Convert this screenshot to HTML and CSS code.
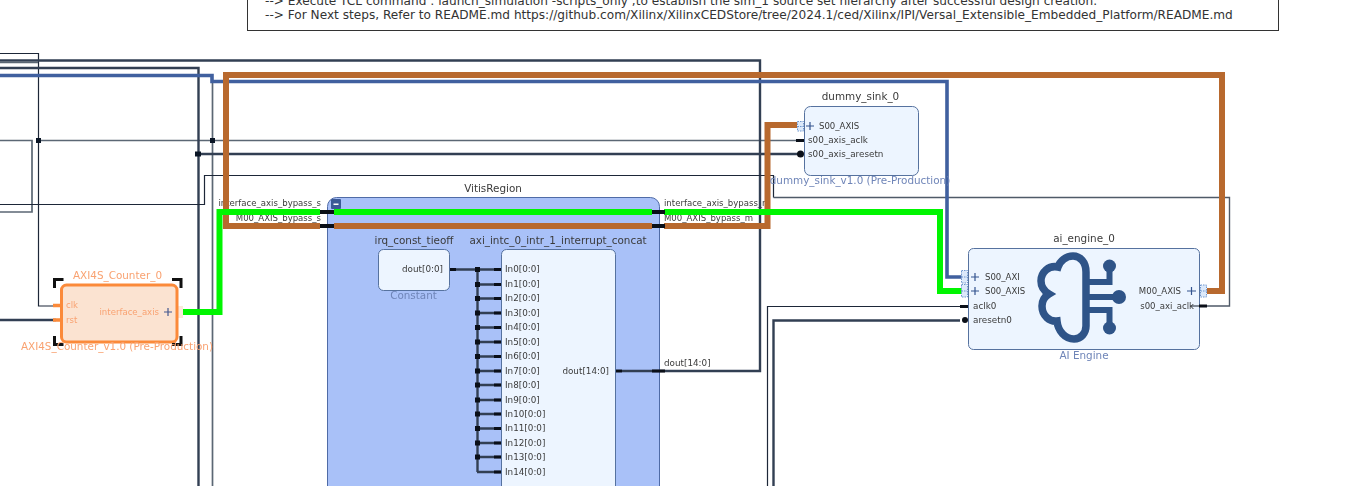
FILE: index.html
```html
<!DOCTYPE html>
<html lang="en">
<head>
<meta charset="utf-8">
<title>Block design</title>
<link rel="stylesheet" href="styles.css">
</head>
<body>
<section class="note">
<p>--&gt; Execute TCL command : launch_simulation -scripts_only ,to establish the sim_1 source set hierarchy after successful design creation.</p>
<p>--&gt; For Next steps, Refer to README.md https://github.com/Xilinx/XilinxCEDStore/tree/2024.1/ced/Xilinx/IPI/Versal_Extensible_Embedded_Platform/README.md</p>
</section>
<svg class="canvas" viewBox="0 31 1354 455" width="1354" height="455" xmlns="http://www.w3.org/2000/svg">
  <!-- region and blocks -->
  <rect class="region" x="327.5" y="197.5" width="332" height="320" rx="9"/>
  <rect class="ip" x="378.5" y="249.5" width="71" height="41" rx="5"/>
  <rect class="ip" x="501.5" y="249.5" width="114" height="270" rx="5"/>
  <rect class="ip" x="804.5" y="106.5" width="114" height="69" rx="6"/>
  <rect class="ip" x="968.5" y="248.5" width="231" height="101" rx="5"/>

  <!-- labels under wires -->
  <g class="lbl tight">
    <text class="end" x="321" y="206">interface_axis_bypass_s</text>
    <text class="end" x="321" y="221">M00_AXIS_bypass_s</text>
    <text x="664" y="206">interface_axis_bypass_m</text>
    <text x="664" y="221">M00_AXIS_bypass_m</text>
  </g>
  <g class="lbl">
    <text x="664" y="366">dout[14:0]</text>
  </g>

  <!-- thin and dark nets -->
  <path class="w-thin" d="M0 53.5H38.5V306H56"/>
  <path class="w-gray" d="M0 140.5H32V212H0"/>
  <path class="w-gray" d="M38 140.5H798"/>
  <path class="w-gray" d="M212.5 81V486"/>
  <path class="w-dark" d="M0 60.5H760V371H622"/>
  <path class="w-gray" d="M0 62.5H38"/>
  <path class="w-dark" d="M0 68H198.5V486"/>
  <path class="w-dark" d="M197 154H798"/>
  <path class="w-dark" d="M0 320H56"/>
  <path class="w-thin" d="M0 204.5H204.5V175.5H773.5V197.5"/>
  <path class="w-gray1" d="M773.5 197.5H1229.5V306H1207"/>
  <path class="w-gray1" d="M1190 306H1207"/>
  <path class="w-thin" d="M960 306.5H767.5V486"/>
  <path class="w-dark" d="M960 320.5H773.5V486"/>

  <!-- junction dots -->
  <rect class="dot" x="36" y="138" width="5" height="5"/>
  <rect class="dot" x="210" y="138" width="5" height="5"/>
  <rect class="dot" x="195" y="151.5" width="6" height="5"/>

  <!-- block interior wiring -->
  <path class="w-dark" d="M450 269.5H501M477.5 269.5V472M477 284.5H501M477 298.5H501M477 313H501M477 327.5H501M477 342H501M477 356.5H501M477 371H501M477 385H501M477 400H501M477 414H501M477 428.5H501M477 443H501M477 457H501M477 472H501"/>
  <g class="stub">
    <rect x="450" y="268" width="6" height="3"/>
    <rect x="494" y="268" width="7" height="3"/><rect x="494" y="283" width="7" height="3"/><rect x="494" y="297" width="7" height="3"/><rect x="494" y="311.5" width="7" height="3"/><rect x="494" y="326" width="7" height="3"/><rect x="494" y="340.5" width="7" height="3"/><rect x="494" y="355" width="7" height="3"/><rect x="494" y="369.5" width="7" height="3"/><rect x="494" y="383.5" width="7" height="3"/><rect x="494" y="398.5" width="7" height="3"/><rect x="494" y="412.5" width="7" height="3"/><rect x="494" y="427" width="7" height="3"/><rect x="494" y="441.5" width="7" height="3"/><rect x="494" y="455.5" width="7" height="3"/><rect x="494" y="470.5" width="7" height="3"/>
    <rect x="616" y="369.5" width="6" height="3"/>
    <rect x="652" y="369.5" width="13" height="3"/>
    <rect x="475" y="267" width="5" height="5"/>
    <rect x="475" y="282" width="5" height="5"/><rect x="475" y="296" width="5" height="5"/><rect x="475" y="310.5" width="5" height="5"/><rect x="475" y="325" width="5" height="5"/><rect x="475" y="339.5" width="5" height="5"/><rect x="475" y="354" width="5" height="5"/><rect x="475" y="368.5" width="5" height="5"/><rect x="475" y="382.5" width="5" height="5"/><rect x="475" y="397.5" width="5" height="5"/><rect x="475" y="411.5" width="5" height="5"/><rect x="475" y="426" width="5" height="5"/><rect x="475" y="440.5" width="5" height="5"/><rect x="475" y="454.5" width="5" height="5"/>
    <rect x="796" y="139" width="8" height="3"/>
    <circle cx="800.5" cy="154" r="3.5"/>
    <rect x="960" y="305" width="8" height="3"/>
    <circle cx="965" cy="320" r="3"/>
    <rect x="1199" y="304.5" width="8" height="3"/>
  </g>

  <!-- thick buses -->
  <path class="w-blue" d="M0 75.5H212V81.5H947V277H962"/>
  <path class="w-copper" d="M320 226H226V75H1222V291H1207"/>
  <path class="w-copper" d="M334 226H652"/>
  <path class="w-copper" d="M664 226H767.5V125H797"/>
  <path class="w-green" d="M183 312H219.5V212H320"/>
  <path class="w-green" d="M334 212H652"/>
  <path class="w-green" d="M664 212H940V291H962"/>
  <g class="stub">
    <rect x="320" y="210" width="14" height="4"/>
    <rect x="320" y="224" width="14" height="4"/>
    <rect x="652" y="210" width="13" height="4"/>
    <rect x="652" y="224" width="13" height="4"/>
  </g>

  <!-- collapse button -->
  <rect class="minus" x="331" y="199" width="10" height="10" rx="1"/>
  <rect class="minus-bar" x="333.5" y="203.5" width="5" height="1.5"/>

  <!-- bus port grips -->
  <g class="port">
    <path d="M797.5 121.5H803.5V131H797.5ZM797.5 126.5H803.5"/>
    <path d="M961.5 270.5H967.5V283H961.5ZM961.5 277H967.5"/>
    <path d="M961.5 284.5H967.5V297H961.5ZM961.5 291H967.5"/>
    <path d="M1200.5 285H1206.5V297H1200.5ZM1200.5 291H1206.5"/>
  </g>
  <g class="plus">
    <path d="M806 126H814M810 122V130"/>
    <path d="M971 277H979M975 273V281"/>
    <path d="M971 291H979M975 287V295"/>
    <path d="M1187 291H1196M1191.5 287V295"/>
  </g>

  <!-- block titles and ports -->
  <g class="title">
    <text class="mid" x="493" y="192">VitisRegion</text>
    <text class="mid" x="414" y="244">irq_const_tieoff</text>
    <text class="mid" x="558" y="244">axi_intc_0_intr_1_interrupt_concat</text>
    <text class="mid" x="860.5" y="100">dummy_sink_0</text>
    <text class="mid" x="1084" y="242">ai_engine_0</text>
  </g>
  <g class="sub">
    <text class="mid" x="413.5" y="299">Constant</text>
    <text class="mid" x="860" y="184">dummy_sink_v1.0 (Pre-Production)</text>
    <text class="mid" x="1084" y="359">AI Engine</text>
  </g>
  <g class="lbl">
    <text class="end" x="443" y="272">dout[0:0]</text>
    <text x="505" y="272">In0[0:0]</text>
    <text x="505" y="287">In1[0:0]</text>
    <text x="505" y="301">In2[0:0]</text>
    <text x="505" y="316">In3[0:0]</text>
    <text x="505" y="330">In4[0:0]</text>
    <text x="505" y="345">In5[0:0]</text>
    <text x="505" y="359">In6[0:0]</text>
    <text x="505" y="374">In7[0:0]</text>
    <text x="505" y="388">In8[0:0]</text>
    <text x="505" y="403">In9[0:0]</text>
    <text x="505" y="417">In10[0:0]</text>
    <text x="505" y="431">In11[0:0]</text>
    <text x="505" y="446">In12[0:0]</text>
    <text x="505" y="460">In13[0:0]</text>
    <text x="505" y="475">In14[0:0]</text>
    <text class="end" x="609" y="374">dout[14:0]</text>
    <text x="808" y="143">s00_axis_aclk</text>
    <text x="808" y="157">s00_axis_aresetn</text>
    <text x="973" y="309">aclk0</text>
    <text x="973" y="323">aresetn0</text>
  </g>
  <g class="lbl tight">
    <text x="819" y="129">S00_AXIS</text>
    <text x="985" y="280">S00_AXI</text>
    <text x="985" y="294">S00_AXIS</text>
    <text class="end" x="1181" y="294">M00_AXIS</text>
    <text class="end" x="1194" y="309">s00_axi_aclk</text>
  </g>

  <!-- AI Engine cloud logo -->
  <g class="logo">
    <path d="M1086 272C1086 262 1080 256 1073 256C1066 256 1060 261 1058 267C1049 265 1041 272 1041 281C1041 287 1044 291 1049 294C1044 297 1042 302 1042 306C1042 316 1050 322 1057 321C1058 331 1065 339 1074 339C1081 339 1086 333 1086 326Z"/>
    <path class="branch" d="M1088 282H1109.5V268M1088 297H1118M1088 310H1109.5V326"/>
    <circle cx="1109.5" cy="266" r="6.5"/>
    <circle cx="1119" cy="297" r="7"/>
    <circle cx="1109.5" cy="328" r="6.5"/>
  </g>

  <!-- selected counter block -->
  <rect class="pale" x="178" y="306" width="5" height="12"/>
  <path class="o-stub" d="M53 305.5H61M53 320H61"/>
  <rect class="sel" x="61.5" y="285" width="115.5" height="57" rx="5"/>
  <path class="plus-sel" d="M164 312H172M168 308V316"/>
  <path class="bracket" d="M54.5 288V279.5H63.5M172 279.5H181V288M54.5 336V344.5H63.5M172 344.5H181V336"/>
  <g class="o-text">
    <text class="mid" x="117.5" y="279">AXI4S_Counter_0</text>
    <text class="mid" x="117" y="350">AXI4S_Counter_v1.0 (Pre-Production)</text>
  </g>
  <g class="o-lbl">
    <text x="66" y="308">clk</text>
    <text x="66" y="323">rst</text>
    <text class="end" x="159" y="315">interface_axis</text>
  </g>
</svg>
</body>
</html>
```
FILE: styles.css
```css
html, body {
  margin: 0;
  padding: 0;
  background: #fff;
  overflow: hidden;
}
body {
  width: 1354px;
  height: 486px;
  font-family: "DejaVu Sans", sans-serif;
}
.note {
  box-sizing: border-box;
  width: 1032px;
  height: 31px;
  margin-left: 247px;
  padding: 0 0 8px 17px;
  border: 1px solid #333;
  border-top: 0;
  display: flex;
  flex-direction: column;
  justify-content: flex-end;
  font-size: 12.14px;
  line-height: 14px;
  color: #333;
  white-space: nowrap;
}
.note p { margin: 0; }
.canvas {
  display: block;
  filter: blur(0.35px);
}
.canvas text { font-family: "DejaVu Sans", sans-serif; }
.mid { text-anchor: middle; }
.end { text-anchor: end; }
.region { fill: #a9c1f8; stroke: #4f6ba6; stroke-width: 1; }
.ip { fill: #edf5ff; stroke: #56729f; stroke-width: 1; }
.lbl text { font-size: 8.8px; fill: #3b3b3b; }
.lbl.tight text { font-size: 8.55px; }
.title text { font-size: 10.4px; fill: #3a3a3a; }
.sub text { font-size: 10.4px; fill: #6f85b8; }
path[class^="w-"] { fill: none; stroke-linejoin: miter; }
.w-thin { stroke: #1d2738; stroke-width: 1.2; }
.w-gray { stroke: #5b6774; stroke-width: 1.7; }
.w-gray1 { stroke: #4f5a68; stroke-width: 1.4; }
.w-dark { stroke: #323f53; stroke-width: 2.4; }
.w-blue { stroke: #40609f; stroke-width: 3.6; }
.w-copper { stroke: #b8692e; stroke-width: 6; }
.w-green { stroke: #00f500; stroke-width: 6; }
.dot { fill: #0b1626; }
.stub rect, .stub circle { fill: #0a0f18; }
.minus { fill: #3c5a96; }
.minus-bar { fill: #fff; }
.port path { fill: #dce9fa; stroke: #6f97cf; stroke-width: 1; stroke-dasharray: 1.5 1; }
.plus path { fill: none; stroke: #34548f; stroke-width: 1.2; }
.logo path { fill: none; stroke: #2f5488; stroke-width: 7.5; }
.logo .branch { stroke-width: 6; }
.logo circle { fill: #2f5488; }
.sel { fill: #fbe3d1; stroke: #fb8a3a; stroke-width: 3; }
.pale { fill: #fbe9dc; }
.o-stub { fill: none; stroke: #fb8a3a; stroke-width: 3.5; }
.plus-sel { fill: none; stroke: #44588f; stroke-width: 1.2; }
.bracket { fill: none; stroke: #111; stroke-width: 3; }
.o-text text { font-size: 10.4px; fill: #f9a271; }
.o-lbl text { font-size: 8.55px; fill: #f9a271; }
```
